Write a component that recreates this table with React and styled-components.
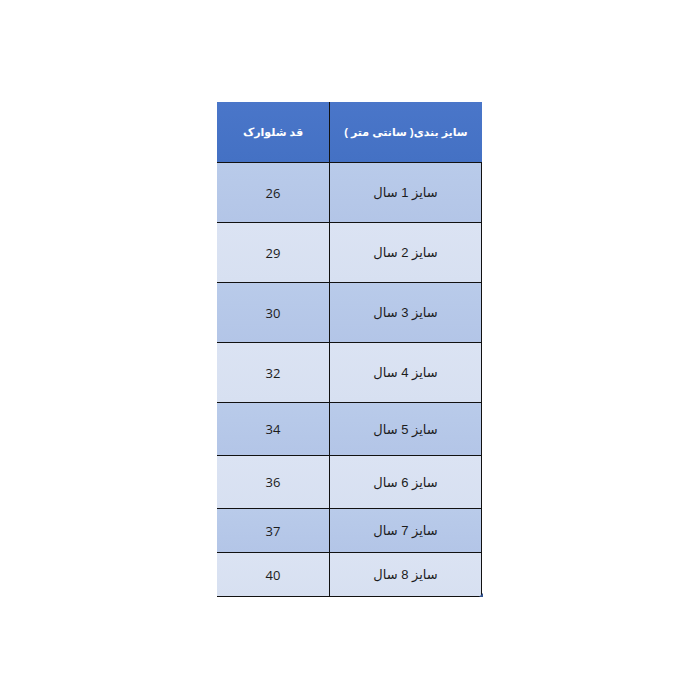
import React from 'react';
import styled, { createGlobalStyle } from 'styled-components';

const GlobalStyle = createGlobalStyle`
  html, body {
    margin: 0;
    padding: 0;
    background: #ffffff;
  }
  body {
    font-family: "Liberation Sans", "DejaVu Sans", sans-serif;
  }
`;

const Page = styled.div`
  width: 700px;
  height: 700px;
  padding-top: 102px;
  padding-left: 217px;
  box-sizing: border-box;
`;

const Table = styled.div`
  position: relative;
  display: grid;
  grid-template-columns: 153px 112px;
  width: 265px;
  direction: rtl;
  border-bottom: 1px solid #111;

  &::after {
    content: '';
    position: absolute;
    right: -1px;
    bottom: -1px;
    width: 0;
    height: 0;
    border-left: 4px solid transparent;
    border-bottom: 4px solid #34548f;
  }
`;

const Cell = styled.div`
  display: flex;
  align-items: center;
  justify-content: center;
  height: ${(p) => p.$h}px;
  box-sizing: border-box;
  font-size: ${(p) => (p.$head ? 11 : 13)}px;
  color: ${(p) => (p.$head ? '#ffffff' : '#1c1c1c')};
  font-weight: ${(p) => (p.$head ? 700 : 400)};
  background: ${(p) =>
    p.$head
      ? 'linear-gradient(180deg, #4a76c9 0%, #4471c4 100%)'
      : p.$dark
      ? 'linear-gradient(180deg, #b9cbea 0%, #b3c5e7 100%)'
      : 'linear-gradient(180deg, #dbe3f3 0%, #d7e0f1 100%)'};
  border-top: ${(p) => (p.$head ? 'none' : '1px solid #111')};
  border-left: ${(p) => (p.$first ? '1px solid #111' : 'none')};
  border-right: ${(p) => (p.$first && !p.$head ? '1px solid #111' : 'none')};
`;

const Num = styled.span`
  font-family: "Open Sans", "Liberation Sans", sans-serif;
  font-size: 13px;
`;

const rows = [
  { size: 'سایز 1 سال', len: '26', h: 60 },
  { size: 'سایز 2 سال', len: '29', h: 60 },
  { size: 'سایز 3 سال', len: '30', h: 60 },
  { size: 'سایز 4 سال', len: '32', h: 60 },
  { size: 'سایز 5 سال', len: '34', h: 53 },
  { size: 'سایز 6 سال', len: '36', h: 53 },
  { size: 'سایز 7 سال', len: '37', h: 44 },
  { size: 'سایز 8 سال', len: '40', h: 44 },
];

export default function App() {
  return (
    <>
      <GlobalStyle />
      <Page>
        <Table>
          <Cell $head $first $h={60}>
            سایز بندی( سانتی متر )
          </Cell>
          <Cell $head $h={60}>
            قد شلوارک
          </Cell>
          {rows.map((r, i) => (
            <React.Fragment key={r.len}>
              <Cell $first $dark={i % 2 === 0} $h={r.h}>
                {r.size}
              </Cell>
              <Cell $dark={i % 2 === 0} $h={r.h}>
                <Num>{r.len}</Num>
              </Cell>
            </React.Fragment>
          ))}
        </Table>
      </Page>
    </>
  );
}
